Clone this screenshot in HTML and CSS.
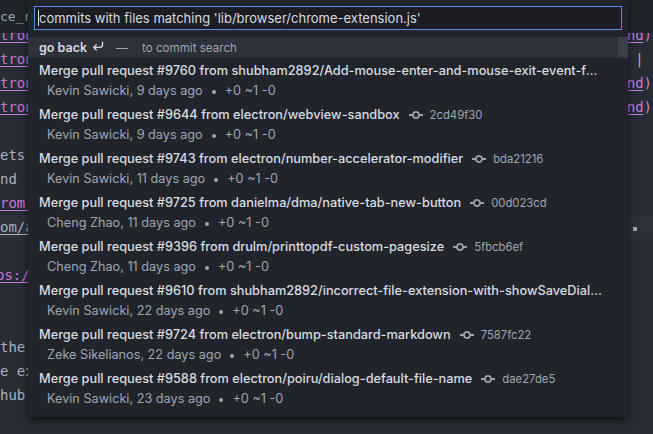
FILE: index.html
```html
<!DOCTYPE html>
<html>
<head>
<meta charset="utf-8">
<link rel="stylesheet" href="styles.css">
</head>
<body>
<div class="workspace">
  <div class="tabbar"><span class="tab-title">ce_rc</span></div>
  <div class="editor">
    <div class="line"><span class="kw u">tron</span><span class="kw"><span class="u">nd</span>)</span></div>
    <div class="line"><span class="kw u">tron</span><span class="txt">| </span></div>
    <div class="line"><span class="kw u">tron</span><span class="kw"><span class="u">nd</span>)</span></div>
    <div class="line"><span class="kw u">tron</span><span class="kw"><span class="u">nd</span>)</span></div>
    <div class="line"></div>
    <div class="line"><span class="txt">ets</span></div>
    <div class="line"><span class="txt">nd (</span></div>
    <div class="line"><span class="kw u">rom:</span></div>
    <div class="line cursor-line"><span class="txt u">om/a</span><span class="cursor-mark"></span></div>
    <div class="line"></div>
    <div class="line"><span class="kw u shift">ps:/</span></div>
    <div class="line"></div>
    <div class="line"></div>
    <div class="line"><span class="txt">the</span></div>
    <div class="line"><span class="txt">e ex</span></div>
    <div class="line"><span class="txt">hub.</span></div>
    <div class="line"></div>
  </div>

  <div class="panel">
    <div class="search-box"><span class="caret"></span>commits with files matching 'lib/browser/chrome-extension.js'</div>
    <div class="list">
      <div class="scrollbar"></div>
      <div class="back-row">
        <span class="back">go back</span>
        <svg class="return" width="12" height="10" viewBox="0 0 12 10"><path d="M10.5 0.8 V3.8 a2.6 2.6 0 0 1 -2.6 2.6 H1.8" fill="none" stroke="#d7dae0" stroke-width="1.4"/><path d="M4.6 3.6 L1.8 6.4 L4.6 9.2" fill="none" stroke="#d7dae0" stroke-width="1.4"/></svg>
        <span class="dash">—</span>
        <span class="hint">to commit search</span>
      </div>

      <div class="item">
        <div class="title-row"><span class="title">Merge pull request #9760 from shubham2892/Add-mouse-enter-and-mouse-exit-event-for-webview</span></div>
        <div class="meta">Kevin Sawicki, 9 days ago<span class="dot"></span>+0 ~1 -0</div>
      </div>
      <div class="item">
        <div class="title-row"><span class="title">Merge pull request #9644 from electron/webview-sandbox</span><svg class="commit" width="14" height="16" viewBox="0 0 14 16"><path d="M10.86 7c-.45-1.72-2-3-3.86-3-1.86 0-3.41 1.28-3.86 3H0v2h3.14c.45 1.72 2 3 3.86 3 1.86 0 3.41-1.28 3.86-3H14V7h-3.14zM7 10.2c-1.22 0-2.2-.98-2.2-2.2 0-1.22.98-2.2 2.2-2.2 1.22 0 2.2.98 2.2 2.2 0 1.22-.98 2.2-2.2 2.2z"/></svg><span class="hash">2cd49f30</span></div>
        <div class="meta">Kevin Sawicki, 9 days ago<span class="dot"></span>+0 ~1 -0</div>
      </div>
      <div class="item">
        <div class="title-row"><span class="title">Merge pull request #9743 from electron/number-accelerator-modifier</span><svg class="commit" width="14" height="16" viewBox="0 0 14 16"><path d="M10.86 7c-.45-1.72-2-3-3.86-3-1.86 0-3.41 1.28-3.86 3H0v2h3.14c.45 1.72 2 3 3.86 3 1.86 0 3.41-1.28 3.86-3H14V7h-3.14zM7 10.2c-1.22 0-2.2-.98-2.2-2.2 0-1.22.98-2.2 2.2-2.2 1.22 0 2.2.98 2.2 2.2 0 1.22-.98 2.2-2.2 2.2z"/></svg><span class="hash">bda21216</span></div>
        <div class="meta">Kevin Sawicki, 11 days ago<span class="dot"></span>+0 ~1 -0</div>
      </div>
      <div class="item">
        <div class="title-row"><span class="title">Merge pull request #9725 from danielma/dma/native-tab-new-button</span><svg class="commit" width="14" height="16" viewBox="0 0 14 16"><path d="M10.86 7c-.45-1.72-2-3-3.86-3-1.86 0-3.41 1.28-3.86 3H0v2h3.14c.45 1.72 2 3 3.86 3 1.86 0 3.41-1.28 3.86-3H14V7h-3.14zM7 10.2c-1.22 0-2.2-.98-2.2-2.2 0-1.22.98-2.2 2.2-2.2 1.22 0 2.2.98 2.2 2.2 0 1.22-.98 2.2-2.2 2.2z"/></svg><span class="hash">00d023cd</span></div>
        <div class="meta">Cheng Zhao, 11 days ago<span class="dot"></span>+0 ~1 -0</div>
      </div>
      <div class="item">
        <div class="title-row"><span class="title">Merge pull request #9396 from drulm/printtopdf-custom-pagesize</span><svg class="commit" width="14" height="16" viewBox="0 0 14 16"><path d="M10.86 7c-.45-1.72-2-3-3.86-3-1.86 0-3.41 1.28-3.86 3H0v2h3.14c.45 1.72 2 3 3.86 3 1.86 0 3.41-1.28 3.86-3H14V7h-3.14zM7 10.2c-1.22 0-2.2-.98-2.2-2.2 0-1.22.98-2.2 2.2-2.2 1.22 0 2.2.98 2.2 2.2 0 1.22-.98 2.2-2.2 2.2z"/></svg><span class="hash">5fbcb6ef</span></div>
        <div class="meta">Cheng Zhao, 11 days ago<span class="dot"></span>+0 ~1 -0</div>
      </div>
      <div class="item">
        <div class="title-row"><span class="title">Merge pull request #9610 from shubham2892/incorrect-file-extension-with-showSaveDialog</span></div>
        <div class="meta">Kevin Sawicki, 22 days ago<span class="dot"></span>+0 ~1 -0</div>
      </div>
      <div class="item">
        <div class="title-row"><span class="title">Merge pull request #9724 from electron/bump-standard-markdown</span><svg class="commit" width="14" height="16" viewBox="0 0 14 16"><path d="M10.86 7c-.45-1.72-2-3-3.86-3-1.86 0-3.41 1.28-3.86 3H0v2h3.14c.45 1.72 2 3 3.86 3 1.86 0 3.41-1.28 3.86-3H14V7h-3.14zM7 10.2c-1.22 0-2.2-.98-2.2-2.2 0-1.22.98-2.2 2.2-2.2 1.22 0 2.2.98 2.2 2.2 0 1.22-.98 2.2-2.2 2.2z"/></svg><span class="hash">7587fc22</span></div>
        <div class="meta">Zeke Sikelianos, 22 days ago<span class="dot"></span>+0 ~1 -0</div>
      </div>
      <div class="item">
        <div class="title-row"><span class="title">Merge pull request #9588 from electron/poiru/dialog-default-file-name</span><svg class="commit" width="14" height="16" viewBox="0 0 14 16"><path d="M10.86 7c-.45-1.72-2-3-3.86-3-1.86 0-3.41 1.28-3.86 3H0v2h3.14c.45 1.72 2 3 3.86 3 1.86 0 3.41-1.28 3.86-3H14V7h-3.14zM7 10.2c-1.22 0-2.2-.98-2.2-2.2 0-1.22.98-2.2 2.2-2.2 1.22 0 2.2.98 2.2 2.2 0 1.22-.98 2.2-2.2 2.2z"/></svg><span class="hash">dae27de5</span></div>
        <div class="meta">Kevin Sawicki, 23 days ago<span class="dot"></span>+0 ~1 -0</div>
      </div>
    </div>
  </div>
</div>
</body>
</html>
```

FILE: styles.css
```css
html, body {
  margin: 0;
  padding: 0;
  background: #282c34;
}
body {
  width: 653px;
  height: 434px;
  overflow: hidden;
}
.workspace {
  position: relative;
  width: 653px;
  height: 434px;
  overflow: hidden;
}
.tabbar {
  position: relative;
  z-index: 1;
  height: 33px;
  background: #21252b;
  display: flex;
  align-items: center;
  font-family: "DejaVu Sans Mono", monospace;
  font-size: 13px;
  color: #9da5b4;
}
.tab-title {
  margin-top: -1px;
}
.editor {
  margin-top: -10px;
  font-family: "DejaVu Sans Mono", monospace;
  font-size: 14px;
}
.line {
  height: 24px;
  line-height: 24px;
  display: flex;
  justify-content: space-between;
  white-space: pre;
  padding-right: 1px;
}
.kw { color: #c678dd; }
.txt { color: #abb2bf; }
.u { text-decoration: underline; text-underline-offset: 2px; }
.shift { margin-left: -4px; }
.cursor-line {
  background: #2c313c;
  align-items: center;
}
.cursor-mark {
  width: 4px;
  height: 4px;
  background: #9da5b4;
  margin-right: 15px;
  margin-top: 3px;
}

.panel {
  position: absolute;
  left: 28px;
  top: 0;
  width: 600px;
  height: 417px;
  background: #21252b;
  box-shadow: 0 3px 8px rgba(0, 0, 0, 0.6);
  z-index: 2;
  font-family: "Inter", "Noto Sans", sans-serif;
}
.search-box {
  margin: 6px 6px 0 6px;
  height: 22px;
  border: 1px solid #568af2;
  background: #1b1d23;
  color: #d7dae0;
  font-size: 13px;
  line-height: 22px;
  padding-left: 3px;
  display: flex;
  align-items: center;
  white-space: pre;
}
.caret {
  width: 1px;
  height: 16px;
  background: #d7dae0;
}
.list {
  position: relative;
  margin-top: 7px;
}
.scrollbar {
  position: absolute;
  right: 0;
  top: 0;
  width: 10px;
  height: 20px;
  background: #3a3f4b;
}
.back-row {
  height: 21px;
  background: #2c313a;
  display: flex;
  align-items: center;
  padding-left: 11px;
}
.back {
  color: #d7dae0;
  font-weight: 600;
  font-size: 12.5px;
}
.return {
  margin-left: 5px;
  margin-top: -3px;
}
.dash {
  color: #9da5b4;
  margin-left: 12px;
  font-size: 12px;
}
.hint {
  color: #9da5b4;
  font-size: 11.6px;
  margin-left: 14px;
}
.item {
  height: 40px;
  padding: 2px 23px 2px 11px;
}
.title-row {
  height: 22px;
  line-height: 22px;
  display: flex;
  align-items: center;
  font-size: 12.75px;
  white-space: nowrap;
  overflow: hidden;
}
.title {
  color: #d7dae0;
  font-weight: 500;
  overflow: hidden;
  text-overflow: ellipsis;
  min-width: 0;
}
.commit {
  flex: none;
  fill: #9da5b4;
  margin-left: 9px;
}
.hash {
  color: #9da5b4;
  margin-left: 7px;
  font-size: 11.3px;
}
.meta {
  height: 18px;
  line-height: 18px;
  padding-left: 8px;
  color: #9da5b4;
  font-size: 12.7px;
  white-space: pre;
  display: flex;
  align-items: center;
}
.dot {
  width: 4px;
  height: 4px;
  border-radius: 50%;
  background: #9da5b4;
  margin: 1px 9px 0 9px;
}
```
